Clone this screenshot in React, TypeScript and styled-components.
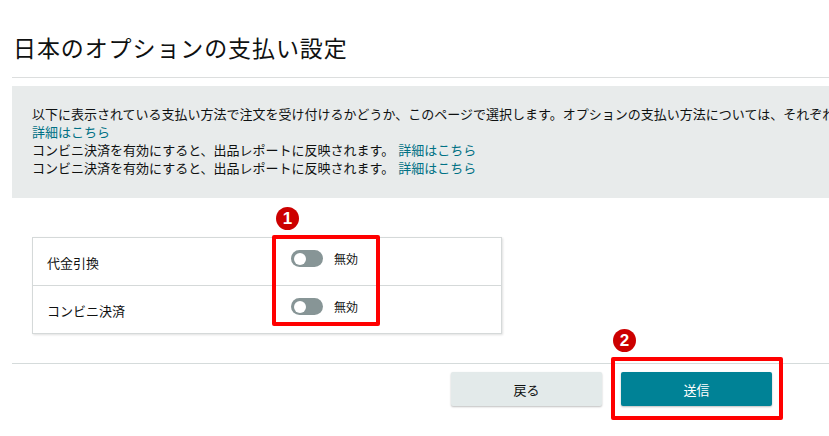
import React from "react";
import styled, { createGlobalStyle } from "styled-components";

const Global = createGlobalStyle`
  html, body { margin: 0; padding: 0; background: #fff; overflow: hidden; height: 100%; }
  body { font-family: "Noto Sans CJK JP", "Noto Sans", sans-serif; color: #0f1111; }
`;

const Page = styled.div`
  position: relative;
  width: 1100px;
  min-height: 436px;
  padding-left: 12px;
  box-sizing: border-box;
`;

const Title = styled.h1`
  margin: 0;
  padding: 30px 0 13px 1px;
  font-size: 23px;
  line-height: 34px;
  font-weight: 400;
  letter-spacing: 0.9px;
  color: #0f1111;
  border-bottom: 1px solid #dcdede;
`;

const InfoBox = styled.div`
  margin-top: 8px;
  background: #e8ebeb;
  padding: 19px 20px 21px;
  font-size: 13px;
  line-height: 18px;
`;

const InfoLine = styled.div`
  white-space: nowrap;
`;

const Link = styled.a<{ $gap?: boolean }>`
  color: #007185;
  text-decoration: none;
  margin-left: ${(p) => (p.$gap ? "4px" : "0")};
`;

const Table = styled.div`
  margin: 39px 0 0 20px;
  width: 470px;
  border: 1px solid #d5d9d9;
  box-shadow: 1px 1px 2px rgba(0, 0, 0, 0.12);
  box-sizing: border-box;
`;

const Row = styled.div<{ $first?: boolean }>`
  display: grid;
  grid-template-columns: 243px 1fr;
  align-items: center;
  height: 47px;
  border-top: ${(p) => (p.$first ? "none" : "1px solid #d5d9d9")};
  box-sizing: content-box;
`;

const Label = styled.div`
  padding: 2px 0 0 14px;
  font-size: 13px;
`;

const ToggleCell = styled.div`
  display: flex;
  align-items: center;
  gap: 11px;
  padding: 0 0 6px 15px;
  font-size: 12px;
`;

const Toggle = styled.span`
  position: relative;
  display: inline-block;
  width: 32px;
  height: 17px;
  border-radius: 9px;
  background: #879596;
  &::after {
    content: "";
    position: absolute;
    left: 3px;
    top: 2.5px;
    width: 12px;
    height: 12px;
    border-radius: 50%;
    background: #fff;
  }
`;

const Footer = styled.div`
  margin-top: 29px;
  border-top: 1px solid #d5dbdb;
  padding: 8px 0 0 439px;
  display: flex;
  gap: 19px;
`;

const Button = styled.button<{ $primary?: boolean }>`
  width: 151px;
  height: 34px;
  border: none;
  border-radius: 2px;
  font-family: inherit;
  font-size: 13px;
  cursor: pointer;
  background: ${(p) => (p.$primary ? "#008296" : "#e3eaea")};
  color: ${(p) => (p.$primary ? "#fff" : "#0f1111")};
  box-shadow: 0 1px 2px rgba(0, 0, 0, 0.25);
`;

const Highlight = styled.div<{ $x: number; $y: number; $w: number; $h: number }>`
  position: absolute;
  left: ${(p) => p.$x}px;
  top: ${(p) => p.$y}px;
  width: ${(p) => p.$w}px;
  height: ${(p) => p.$h}px;
  border: 4px solid #ff0000;
  border-radius: 2px;
  box-sizing: border-box;
`;

const Badge = styled.div<{ $x: number; $y: number }>`
  position: absolute;
  left: ${(p) => p.$x}px;
  top: ${(p) => p.$y}px;
  width: 23px;
  height: 23px;
  border-radius: 50%;
  background: #cc0000;
  color: #fff;
  font-family: "Liberation Sans", Arial, sans-serif;
  font-weight: 700;
  font-size: 17px;
  line-height: 23px;
  text-align: center;
`;

export default function App() {
  return (
    <>
      <Global />
      <Page>
        <Title>日本のオプションの支払い設定</Title>
        <InfoBox>
          <InfoLine>
            以下に表示されている支払い方法で注文を受け付けるかどうか、このページで選択します。オプションの支払い方法については、それぞれの支払い方法のページを参照してください。
          </InfoLine>
          <InfoLine>
            <Link href="#">詳細はこちら</Link>
          </InfoLine>
          <InfoLine>
            コンビニ決済を有効にすると、出品レポートに反映されます。
            <Link href="#" $gap>詳細はこちら</Link>
          </InfoLine>
          <InfoLine>
            コンビニ決済を有効にすると、出品レポートに反映されます。
            <Link href="#" $gap>詳細はこちら</Link>
          </InfoLine>
        </InfoBox>
        <Table>
          <Row $first>
            <Label>代金引換</Label>
            <ToggleCell>
              <Toggle />
              無効
            </ToggleCell>
          </Row>
          <Row>
            <Label>コンビニ決済</Label>
            <ToggleCell>
              <Toggle />
              無効
            </ToggleCell>
          </Row>
        </Table>
        <Footer>
          <Button>戻る</Button>
          <Button $primary>送信</Button>
        </Footer>
        <Highlight $x={272} $y={235} $w={108} $h={91} />
        <Badge $x={276} $y={207}>1</Badge>
        <Highlight $x={611} $y={357} $w={172} $h={63} />
        <Badge $x={613} $y={329}>2</Badge>
      </Page>
    </>
  );
}
